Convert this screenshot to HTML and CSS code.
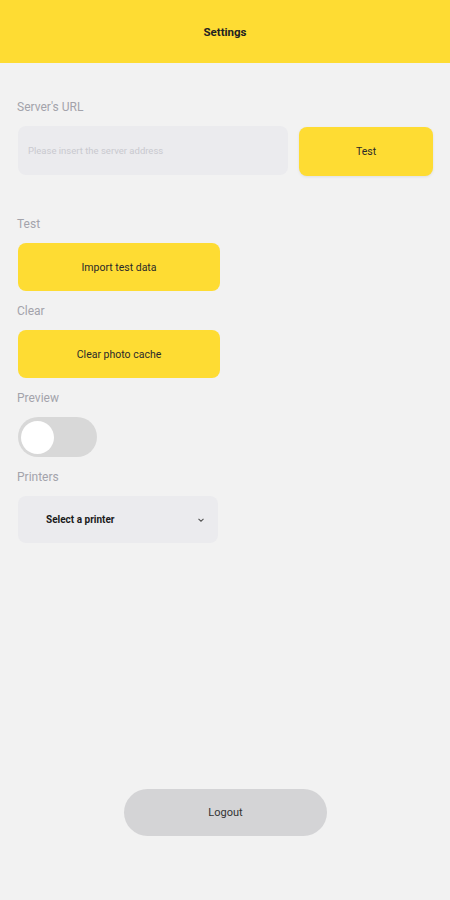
FILE: index.html
```html
<!DOCTYPE html>
<html lang="en">
<head>
    <meta charset="UTF-8">
    <meta name="viewport" content="width=device-width, initial-scale=1.0">
    <title>Settings</title>
    <link rel="stylesheet" href="styles.css">
</head>
<body>
    <div class="app">
        <header class="topbar">Settings</header>

        <main class="content">
            <section class="group group-url">
                <div class="label">Server's URL</div>
                <div class="url-row">
                    <input type="text" class="url-input" placeholder="Please insert the server address">
                    <button class="btn btn-test">Test</button>
                </div>
            </section>

            <section class="group">
                <div class="label">Test</div>
                <button class="btn btn-wide">Import test data</button>
            </section>

            <section class="group">
                <div class="label">Clear</div>
                <button class="btn btn-wide">Clear photo cache</button>
            </section>

            <section class="group">
                <div class="label">Preview</div>
                <div class="toggle"><span class="knob"></span></div>
            </section>

            <section class="group">
                <div class="label">Printers</div>
                <div class="select">
                    <span>Select a printer</span>
                    <svg class="chevron" width="8" height="6" viewBox="0 0 8 6">
                        <path d="M1.5 1.8 L4 4.2 L6.5 1.8" fill="none" stroke="#555" stroke-width="1.1"/>
                    </svg>
                </div>
            </section>
        </main>

        <footer class="bottom">
            <button class="btn-logout">Logout</button>
        </footer>
    </div>
</body>
</html>
```

FILE: styles.css
```css
body {
    margin: 0;
    font-family: Roboto, "Liberation Sans", sans-serif;
    background-color: #f2f2f2;
}

.app {
    display: flex;
    flex-direction: column;
    min-height: 100vh;
}

.topbar {
    height: 63px;
    background-color: #fedc33;
    display: flex;
    justify-content: center;
    align-items: center;
    font-size: 11.5px;
    font-weight: 700;
    color: #222;
}

.content {
    padding: 36px 17px 0 18px;
}

.group {
    margin-bottom: 12px;
}

.group-url {
    margin-bottom: 40px;
}

.label {
    font-size: 12px;
    line-height: 16px;
    color: #a3a3ab;
    margin-bottom: 11px;
    margin-left: -1px;
}

.url-row {
    display: flex;
    gap: 11px;
}

.url-input {
    flex: 0 0 270px;
    height: 49px;
    box-sizing: border-box;
    border: none;
    outline: none;
    border-radius: 8px;
    background-color: #ebebee;
    padding: 0 10px;
    font-family: inherit;
    font-size: 9.5px;
    color: #333;
}

.url-input::placeholder {
    color: #c9c9ce;
}

.btn {
    border: none;
    border-radius: 8px;
    background-color: #fedc33;
    font-family: inherit;
    font-size: 10.5px;
    font-weight: 400;
    color: #2a2a2a;
    cursor: pointer;
}

.btn-test {
    width: 134px;
    height: 49px;
    margin-top: 1px;
    box-shadow: 0 1px 3px rgba(0, 0, 0, 0.08);
}

.btn-wide {
    display: block;
    width: 202px;
    height: 48px;
}

.toggle {
    width: 79px;
    height: 40px;
    border-radius: 20px;
    background-color: #d8d8d8;
    display: flex;
    align-items: center;
    padding: 0 3px;
    box-sizing: border-box;
}

.knob {
    width: 33px;
    height: 33px;
    border-radius: 50%;
    background-color: #fff;
}

.select {
    width: 200px;
    height: 47px;
    border-radius: 8px;
    background-color: #ebebee;
    display: flex;
    align-items: center;
    justify-content: space-between;
    padding: 0 13px 0 28px;
    box-sizing: border-box;
    font-size: 10px;
    font-weight: 700;
    color: #1a1a1a;
}

.bottom {
    margin-top: auto;
    display: flex;
    justify-content: center;
    padding-bottom: 64px;
}

.btn-logout {
    width: 203px;
    height: 47px;
    margin-left: 1px;
    border: none;
    border-radius: 24px;
    background-color: #d4d4d6;
    font-family: inherit;
    font-size: 11px;
    color: #333;
    cursor: pointer;
}
```
